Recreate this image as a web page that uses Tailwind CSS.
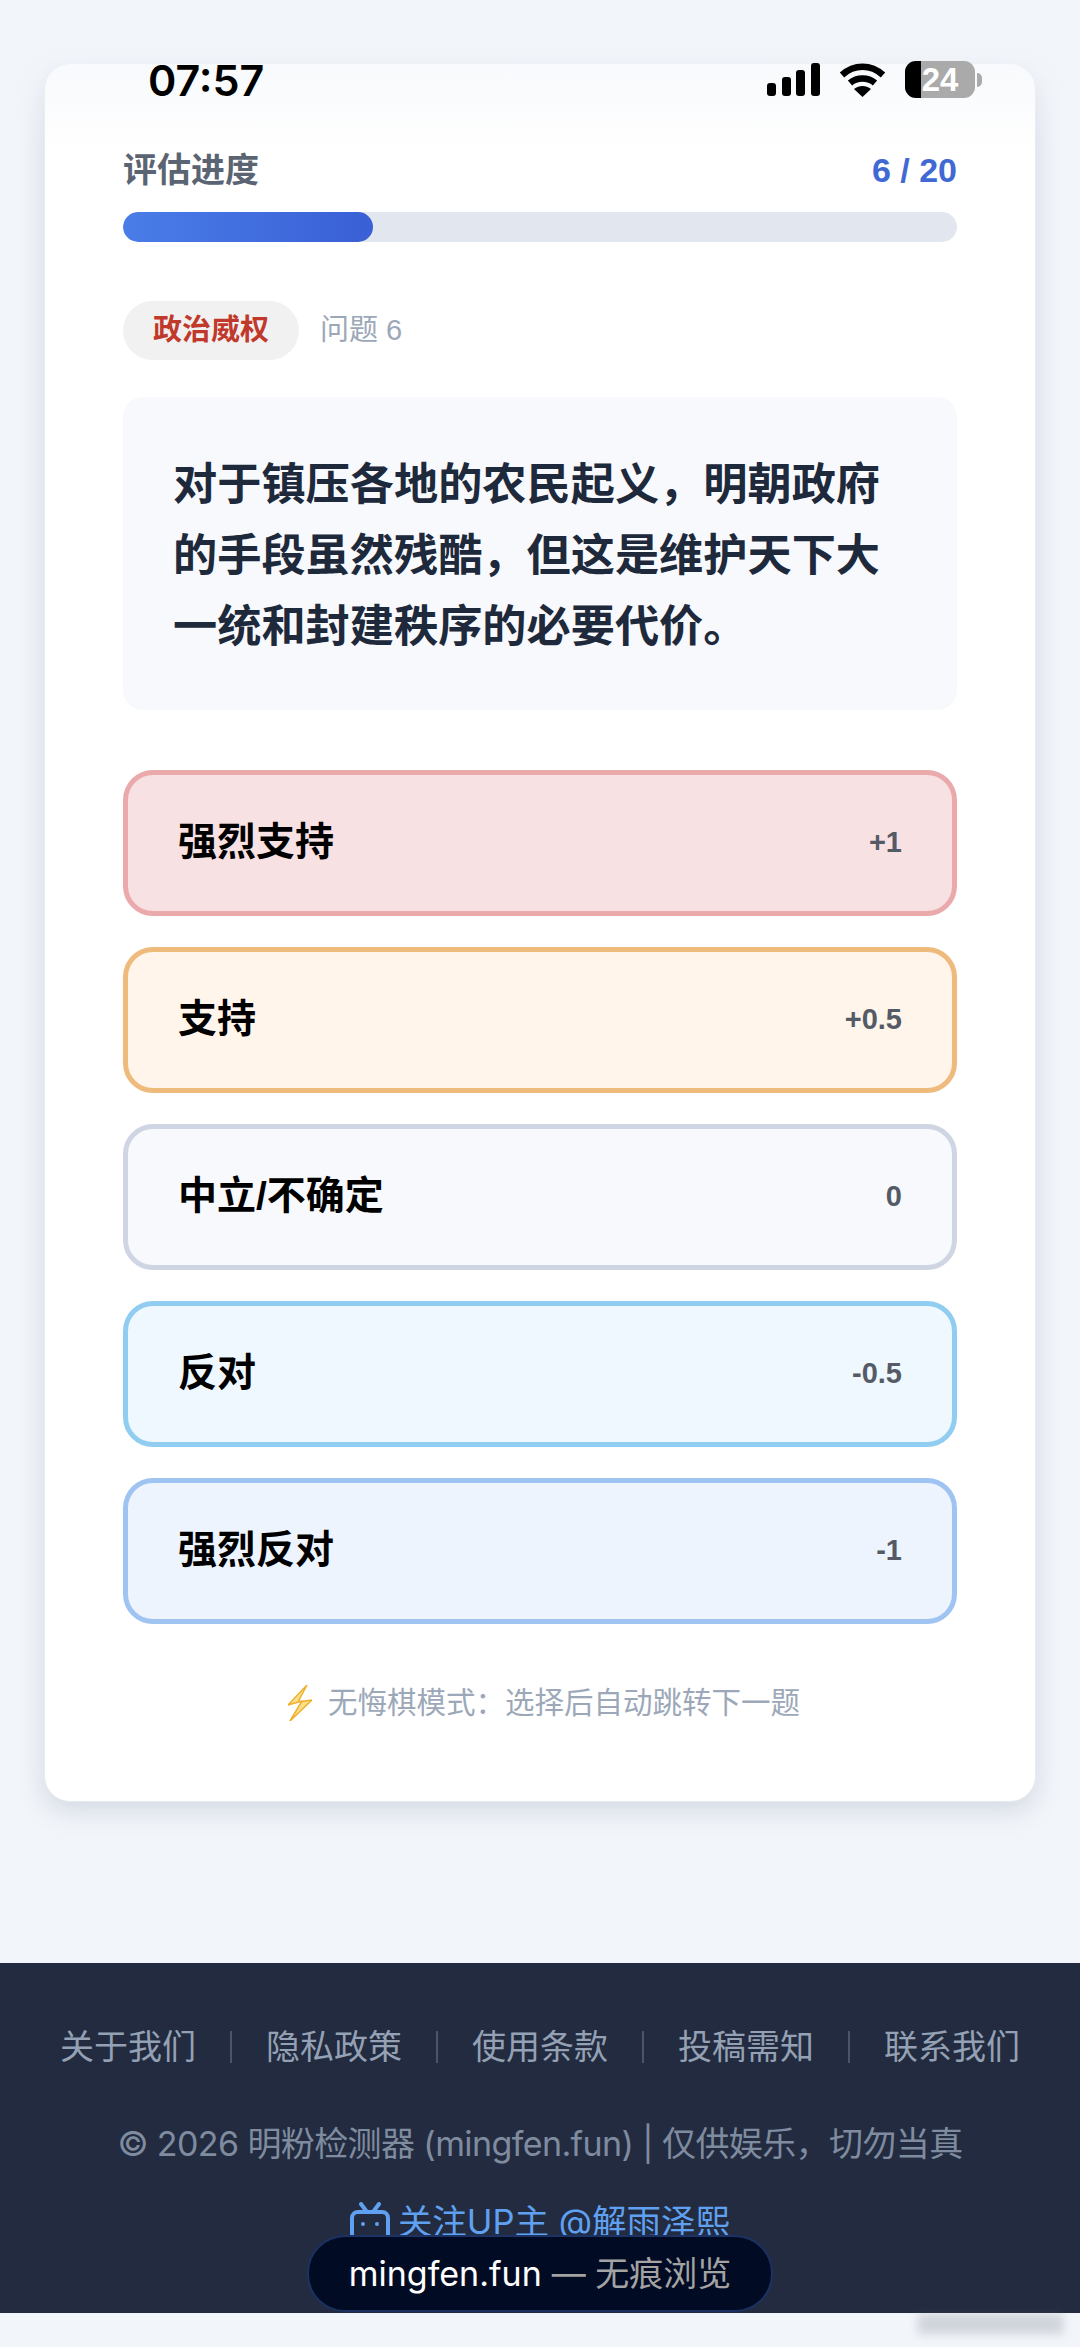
<!DOCTYPE html>
<html lang="zh-CN">
<head>
    <meta charset="UTF-8">
    <meta name="viewport" content="width=device-width, initial-scale=1.0">
    <script src="https://cdn.jsdelivr.net/npm/@tailwindcss/browser@4"></script>
    <title>明粉检测器</title>
</head>
<body class="bg-[#f2f5fa]">
    <div class="relative w-[1080px] h-[2347px] overflow-hidden font-['Liberation_Sans','Noto_Sans_CJK_SC',sans-serif]">
        <main class="h-[1963px] px-[44px] pt-[63px]">
            <div class="bg-white rounded-[26px] border border-[#e6eaf1] shadow-[0_8px_26px_rgba(100,116,139,0.22)] px-[78px] pt-[84px] pb-[76px]">
                <div class="flex justify-between items-center h-[44px]">
                    <span class="text-[34px] font-semibold text-[#5b6472]">评估进度</span>
                    <span class="text-[34px] font-bold text-[#4169d4]">6 / 20</span>
                </div>
                <div class="mt-[20px] h-[30px] rounded-full bg-[#e2e6ef] overflow-hidden">
                    <div class="w-[250px] h-full rounded-full bg-gradient-to-r from-[#4a7de8] to-[#3a5fd6]"></div>
                </div>
                <div class="mt-[59px] flex items-center gap-[21px]">
                    <span class="flex items-center justify-center w-[176px] h-[59px] rounded-full bg-[#f1f1f2] text-[29px] font-bold text-[#c0392b]">政治威权</span>
                    <span class="text-[29px] text-[#9ca8b8]">问题 6</span>
                </div>
                <div class="mt-[37px] rounded-[20px] bg-[#f7f9fc] px-[50px] pt-[52px] pb-[48px] text-[44.2px] leading-[71px] font-bold text-[#1e293b]">
                    对于镇压各地的农民起义，明朝政府<br>的手段虽然残酷，但这是维护天下大<br>一统和封建秩序的必要代价。
                </div>
                <div class="mt-[60px] flex flex-col gap-[31px]">
                    <div class="h-[146px] flex items-center justify-between px-[50px] rounded-[30px] border-[5px] border-[#eaa9ab] bg-[#f8e1e2]">
                        <span class="pb-[2px] text-[39px] font-bold text-black">强烈支持</span>
                        <span class="text-[29px] font-bold text-[#555b66]">+1</span>
                    </div>
                    <div class="h-[146px] flex items-center justify-between px-[50px] rounded-[30px] border-[5px] border-[#eebb7d] bg-[#fff5eb]">
                        <span class="pb-[2px] text-[39px] font-bold text-black">支持</span>
                        <span class="text-[29px] font-bold text-[#555b66]">+0.5</span>
                    </div>
                    <div class="h-[146px] flex items-center justify-between px-[50px] rounded-[30px] border-[5px] border-[#cfd5e3] bg-[#f7f9fc]">
                        <span class="pb-[2px] text-[39px] font-bold text-black">中立/不确定</span>
                        <span class="text-[29px] font-bold text-[#555b66]">0</span>
                    </div>
                    <div class="h-[146px] flex items-center justify-between px-[50px] rounded-[30px] border-[5px] border-[#90cdf0] bg-[#eff8fe]">
                        <span class="pb-[2px] text-[39px] font-bold text-black">反对</span>
                        <span class="text-[29px] font-bold text-[#555b66]">-0.5</span>
                    </div>
                    <div class="h-[146px] flex items-center justify-between px-[50px] rounded-[30px] border-[5px] border-[#a0c4f2] bg-[#edf4fe]">
                        <span class="pb-[2px] text-[39px] font-bold text-black">强烈反对</span>
                        <span class="text-[29px] font-bold text-[#555b66]">-1</span>
                    </div>
                </div>
                <div class="mt-[57px] ml-[8px] h-[44px] flex items-center justify-center gap-[16px] text-[29.5px] text-[#9ca8b8]">
                    <svg class="w-[24px] h-[36px]" viewBox="0 0 24 36" fill="#fbe08a" stroke="#efb02e" stroke-width="1.5" stroke-linejoin="round"><path d="M19 0 0 20l14-4L2 36l22-21-14 2z"/></svg>
                    <span>无悔棋模式：选择后自动跳转下一题</span>
                </div>
            </div>
        </main>

        <footer class="h-[350px] bg-[#222b3f] flex flex-col items-center pt-[59px] overflow-hidden">
            <div class="flex items-center h-[50px] text-[34px] text-[#94a0b3]">
                <a>关于我们</a>
                <span class="w-[2px] h-[32px] mx-[34px] bg-[#4a5568]"></span>
                <a>隐私政策</a>
                <span class="w-[2px] h-[32px] mx-[34px] bg-[#4a5568]"></span>
                <a>使用条款</a>
                <span class="w-[2px] h-[32px] mx-[34px] bg-[#4a5568]"></span>
                <a>投稿需知</a>
                <span class="w-[2px] h-[32px] mx-[34px] bg-[#4a5568]"></span>
                <a>联系我们</a>
            </div>
            <p class="mt-[47px] h-[50px] leading-[50px] text-[34px] text-[#7f8b9f] font-['Inter','Noto_Sans_CJK_SC',sans-serif] tracking-[-0.6px]">© 2026 明粉检测器 (mingfen.fun) | 仅供娱乐，切勿当真</p>
            <a class="mt-[28px] h-[50px] flex items-center gap-[8px] text-[34.5px] text-[#60a0f0] font-['Inter','Noto_Sans_CJK_SC',sans-serif]">
                <svg class="w-[40px] h-[40px]" viewBox="0 0 40 40" fill="none" stroke="#60a0f0" stroke-width="4" stroke-linecap="round"><rect x="2" y="10" width="36" height="28" rx="6"/><path d="M11 2l6 8M29 2l-6 8"/><circle cx="13" cy="22" r="2" fill="#60a0f0" stroke="none"/><circle cx="27" cy="22" r="2" fill="#60a0f0" stroke="none"/></svg>
                <span>关注UP主 @解雨泽熙</span>
            </a>
        </footer>

        <!-- top fade under the status bar -->
        <div class="absolute top-0 inset-x-0 h-[150px] bg-gradient-to-b from-[#f2f5fa] to-transparent"></div>

        <div class="absolute top-[58px] left-[148px] h-[44px] flex items-center text-[43px] font-semibold text-black font-['Inter',sans-serif]">07:57</div>
        <div class="absolute top-[61px] left-[767px] flex items-center gap-[19px]">
            <svg class="w-[53px] h-[33px]" viewBox="0 0 53 33" fill="#000"><rect x="0" y="20" width="9" height="13" rx="3"/><rect x="15" y="14" width="9" height="19" rx="3"/><rect x="29" y="7" width="9" height="26" rx="3"/><rect x="44" y="0" width="9" height="33" rx="3"/></svg>
            <svg class="w-[47px] h-[34px]" viewBox="0 0 47 34" fill="none" stroke="#000" stroke-width="6.5"><path d="M3 12C15 1 32 1 44 12"/><path d="M11 20c7-6 18-6 25 0"/><path d="M23.5 34 15 26c5-4 12-4 17 0z" fill="#000" stroke="none"/></svg>
            <div class="relative w-[70px] h-[37px] rounded-[11px] bg-[#aaaaaa] overflow-hidden flex items-center justify-center text-[33px] leading-none font-bold text-white">
                <div class="absolute left-0 inset-y-0 w-[16px] bg-black"></div>
                <span class="relative">24</span>
            </div>
        </div>
        <div class="absolute top-[73px] left-[977px] w-[5px] h-[14px] rounded-r-full bg-[#aaaaaa]"></div>

        <div class="absolute left-[307px] top-[2235px] w-[466px] h-[77px] rounded-[38px] bg-[#020b24] border-2 border-[#1c3263] flex items-center justify-center gap-[10px] text-[34px] font-['Inter','Noto_Sans_CJK_SC',sans-serif]">
            <span class="text-white">mingfen.fun</span>
            <span class="text-[#a3a3a3]">— 无痕浏览</span>
        </div>

        <!-- blurred watermark, bottom right -->
        <div class="absolute left-[918px] top-[2314px] w-[145px] h-[20px] bg-[#6b7280]/25 blur-[5px]"></div>
    </div>
</body>
</html>
